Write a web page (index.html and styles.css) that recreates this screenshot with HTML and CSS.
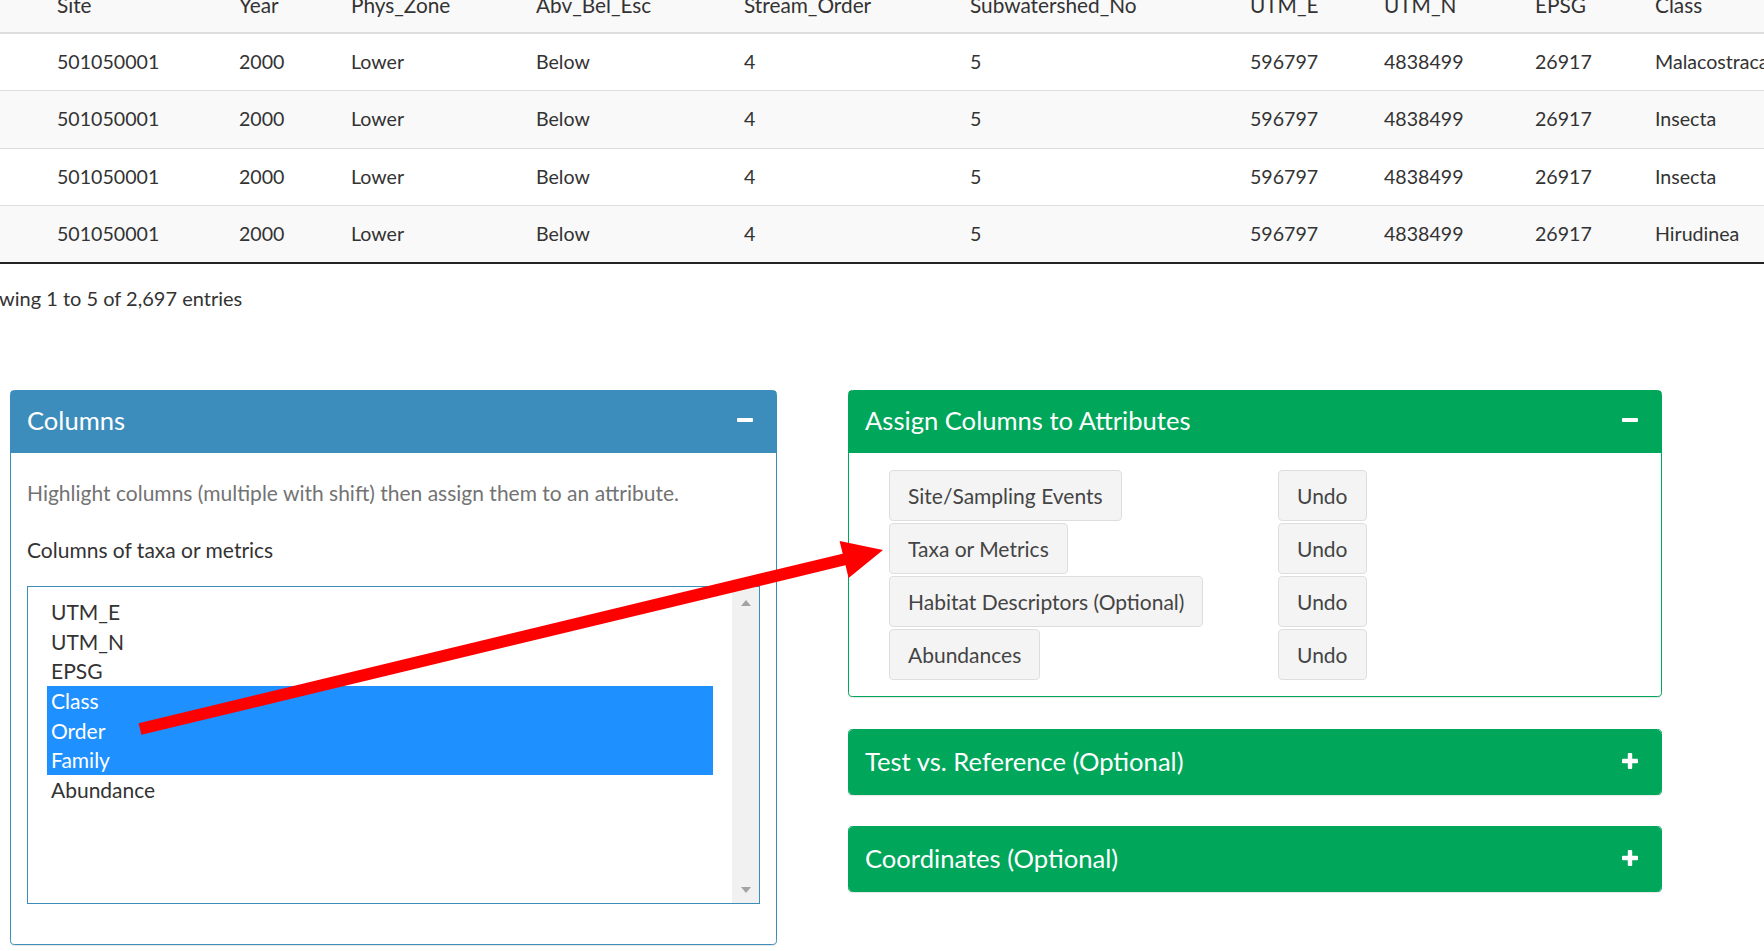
FILE: index.html
```html
<!DOCTYPE html>
<html lang="en">
<head>
<meta charset="utf-8">
<title>Columns</title>
<link rel="stylesheet" href="styles.css">
</head>
<body>
<div class="dt">
  <table class="grid">
    <colgroup>
      <col class="c-rn"><col class="c-site"><col class="c-year"><col class="c-zone"><col class="c-abv"><col class="c-stream"><col class="c-subw"><col class="c-utme"><col class="c-utmn"><col class="c-epsg"><col class="c-class">
    </colgroup>
    <thead>
      <tr><th></th><th>Site</th><th>Year</th><th>Phys_Zone</th><th>Abv_Bel_Esc</th><th>Stream_Order</th><th>Subwatershed_No</th><th>UTM_E</th><th>UTM_N</th><th>EPSG</th><th>Class</th></tr>
    </thead>
    <tbody>
      <tr><td>2</td><td>501050001</td><td>2000</td><td>Lower</td><td>Below</td><td>4</td><td>5</td><td>596797</td><td>4838499</td><td>26917</td><td>Malacostraca</td></tr>
      <tr><td>3</td><td>501050001</td><td>2000</td><td>Lower</td><td>Below</td><td>4</td><td>5</td><td>596797</td><td>4838499</td><td>26917</td><td>Insecta</td></tr>
      <tr><td>4</td><td>501050001</td><td>2000</td><td>Lower</td><td>Below</td><td>4</td><td>5</td><td>596797</td><td>4838499</td><td>26917</td><td>Insecta</td></tr>
      <tr><td>5</td><td>501050001</td><td>2000</td><td>Lower</td><td>Below</td><td>4</td><td>5</td><td>596797</td><td>4838499</td><td>26917</td><td>Hirudinea</td></tr>
    </tbody>
  </table>
  <div class="info">Showing 1 to 5 of 2,697 entries</div>
</div>

<div class="boxes">
  <section class="box box-primary box-columns">
    <header class="box-header">
      <h3 class="box-title">Columns</h3>
      <svg class="tool" width="16" height="16" viewBox="0 0 16 16"><rect x="0" y="6" width="16" height="4" rx="1" fill="#fff"/></svg>
    </header>
    <div class="box-body">
      <p class="help">Highlight columns (multiple with shift) then assign them to an attribute.</p>
      <div class="label">Columns of taxa or metrics</div>
      <div class="listbox">
        <div class="options">
          <div class="opt">UTM_E</div>
          <div class="opt">UTM_N</div>
          <div class="opt">EPSG</div>
          <div class="opt sel">Class</div>
          <div class="opt sel">Order</div>
          <div class="opt sel">Family</div>
          <div class="opt">Abundance</div>
        </div>
        <div class="scrollbar"><span class="arr up"></span><span class="arr down"></span></div>
      </div>
    </div>
  </section>

  <div class="right">
    <section class="box box-success">
      <header class="box-header">
        <h3 class="box-title">Assign Columns to Attributes</h3>
        <svg class="tool" width="16" height="16" viewBox="0 0 16 16"><rect x="0" y="6" width="16" height="4" rx="1" fill="#fff"/></svg>
      </header>
      <div class="box-body assign">
        <button class="btn">Site/Sampling Events</button><button class="btn">Undo</button>
        <button class="btn">Taxa or Metrics</button><button class="btn">Undo</button>
        <button class="btn">Habitat Descriptors (Optional)</button><button class="btn">Undo</button>
        <button class="btn">Abundances</button><button class="btn">Undo</button>
      </div>
    </section>

    <section class="box box-success collapsed">
      <header class="box-header">
        <h3 class="box-title">Test vs. Reference (Optional)</h3>
        <svg class="tool" width="16" height="16" viewBox="0 0 16 16"><rect x="0" y="5.8" width="16" height="4.4" rx="1" fill="#fff"/><rect x="5.8" y="0" width="4.4" height="16" rx="1" fill="#fff"/></svg>
      </header>
    </section>

    <section class="box box-success collapsed">
      <header class="box-header">
        <h3 class="box-title">Coordinates (Optional)</h3>
        <svg class="tool" width="16" height="16" viewBox="0 0 16 16"><rect x="0" y="5.8" width="16" height="4.4" rx="1" fill="#fff"/><rect x="5.8" y="0" width="4.4" height="16" rx="1" fill="#fff"/></svg>
      </header>
    </section>
  </div>
</div>

<svg class="arrow" width="1764" height="951" viewBox="0 0 1764 951">
  <line x1="140" y1="729" x2="846" y2="559" stroke="#ff0000" stroke-width="12"/>
  <polygon points="883,550 848.6,577.9 839.6,540.9" fill="#ff0000"/>
</svg>
</body>
</html>
```

FILE: styles.css
```css
* { box-sizing: border-box; }

html, body {
  margin: 0;
  padding: 0;
  overflow: hidden;
  background: #ffffff;
}

body {
  width: 1764px;
  height: 951px;
  position: relative;
  font-family: Lato, "Open Sans", sans-serif;
  font-size: 21px;
  color: #333333;
}

/* ---------- data table ---------- */
.dt {
  margin-top: -22px;
  margin-left: -34px;
}

.grid {
  table-layout: fixed;
  width: 1874px;
  border-collapse: separate;
  border-spacing: 0;
  border-bottom: 2px solid #222222;
}

.c-rn { width: 76px; }
.c-site { width: 182px; }
.c-year { width: 112px; }
.c-zone { width: 185px; }
.c-abv { width: 208px; }
.c-stream { width: 226px; }
.c-subw { width: 280px; }
.c-utme { width: 134px; }
.c-utmn { width: 151px; }
.c-epsg { width: 120px; }
.c-class { width: 200px; }

.grid th,
.grid td {
  text-align: left;
  font-weight: 400;
  white-space: nowrap;
  overflow: hidden;
}

.grid th {
  padding: 12px 15px;
  line-height: 30px;
  font-size: 20.8px;
  background: #f9f9f9;
  border-bottom: 1px solid #dddddd;
}

.grid td {
  padding: 13px 15px;
  line-height: 30.3px;
  font-size: 19.6px;
  border-top: 1px solid #dddddd;
}

.grid tbody tr:nth-child(even) td { background: #f9f9f9; }

.info {
  margin-top: 19px;
  line-height: 30px;
  font-size: 20px;
}

/* ---------- boxes ---------- */
.boxes {
  display: flex;
  align-items: flex-start;
  margin-top: 77px;
}

.box {
  border: 1px solid;
  border-radius: 4.6px;
  background: #ffffff;
  box-shadow: 0 1px 1px rgba(0, 0, 0, 0.1);
}

.box-primary { border-color: #3c8dbc; }
.box-success { border-color: #00a65a; }

.box-header {
  display: flex;
  align-items: center;
  justify-content: space-between;
  height: 62px;
  padding: 0 23px 4px 16px;
  color: #ffffff;
}

.box-primary .box-header { background: #3c8dbc; }
.box-success .box-header { background: #00a65a; }

.collapsed .box-header {
  height: 64px;
  padding-bottom: 3px;
  border-radius: 3.6px;
}

.box-title {
  margin: 0;
  font-size: 25.6px;
  font-weight: 400;
  line-height: 30px;
}

.tool { display: block; }

.box-columns {
  width: 767px;
  margin-left: 10px;
}

.right {
  width: 814px;
  margin-left: 71px;
}

.box-body { padding: 15px 16px; }

.help {
  margin: 10px 0 27px;
  line-height: 30px;
  color: #737373;
}

.label { line-height: 30px; }

.listbox {
  display: flex;
  margin: 21px 0 25px;
  height: 318px;
  border: 1px solid #3c8dbc;
}

.options {
  flex: 1;
  padding: 10px 19px;
  overflow: hidden;
}

.opt {
  height: 29.6px;
  line-height: 29.6px;
  padding: 0 4px;
  white-space: nowrap;
}

.opt.sel {
  background: #1e90ff;
  color: #ffffff;
}

.scrollbar {
  width: 27px;
  background: #f1f1f1;
  display: flex;
  flex-direction: column;
  justify-content: space-between;
  align-items: center;
  padding: 13px 0 10px;
}

.arr {
  width: 0;
  height: 0;
  border-left: 5.5px solid transparent;
  border-right: 5.5px solid transparent;
}

.arr.up { border-bottom: 6px solid #a3a3a3; }
.arr.down { border-top: 6px solid #a3a3a3; }

/* ---------- assign buttons ---------- */
.assign {
  display: grid;
  grid-template-columns: 389px auto;
  justify-items: start;
  row-gap: 2px;
  padding: 17px 16px 16px 40px;
}

.btn {
  height: 51px;
  padding: 0 18px;
  border: 1px solid #dddddd;
  border-radius: 4.6px;
  background: #f4f4f4;
  color: #444444;
  font-family: inherit;
  font-size: 21px;
  line-height: 49px;
}

.right .collapsed { margin-top: 32px; }
.right .collapsed + .collapsed { margin-top: 31px; }

/* ---------- annotation arrow ---------- */
.arrow {
  position: absolute;
  left: 0;
  top: 0;
  pointer-events: none;
}
```
